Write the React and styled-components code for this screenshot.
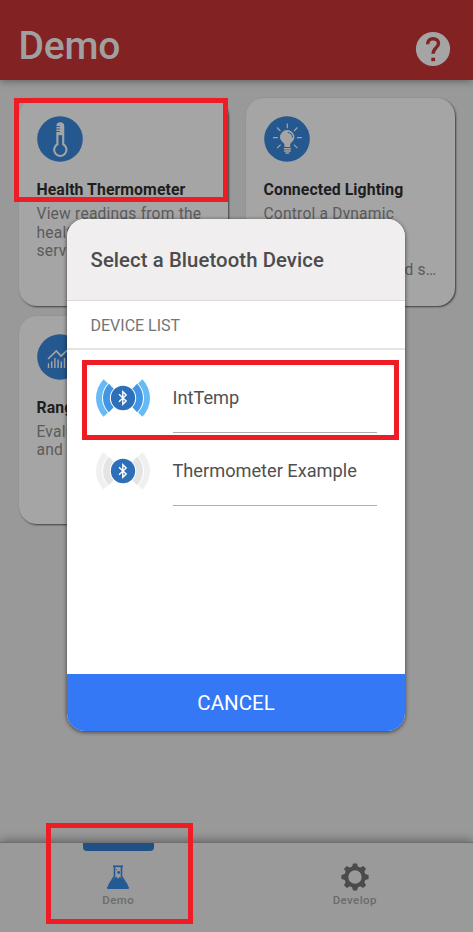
import React from "react";
import styled, { createGlobalStyle } from "styled-components";

const Global = createGlobalStyle`
  * { box-sizing: border-box; }
  body { margin: 0; background: #999; font-family: Roboto, sans-serif; }
`;

const Screen = styled.div`
  position: relative;
  display: flex;
  flex-direction: column;
  width: 473px;
  height: 932px;
  overflow: hidden;
  background: #999;
`;

const Header = styled.header`
  display: flex;
  justify-content: space-between;
  height: 80px;
  padding: 0 22px 0 18.5px;
  background: #822222;
  box-shadow: 0 1px 8px rgba(0, 0, 0, 0.4);
`;

const PageTitle = styled.h1`
  margin: 23px 0 0;
  font-size: 39px;
  line-height: 46px;
  font-weight: 500;
  letter-spacing: -0.2px;
  color: #a0a0a0;
`;

const HelpIcon = styled.svg`
  width: 36px;
  height: 36px;
  margin-top: 31px;
`;

const CardGrid = styled.main`
  flex: 1;
  display: grid;
  grid-template-columns: 209px 209px;
  grid-auto-rows: 208px;
  gap: 9.5px 18px;
  align-content: start;
  padding: 18px 18px 0 18.5px;
`;

const Card = styled.section`
  padding: 18px 18px;
  border-radius: 18px;
  background: #a5a5a5;
  box-shadow: 1px 1px 2px rgba(0, 0, 0, 0.6);
`;

const CardIcon = styled.svg`
  display: block;
  width: 46px;
  height: 46px;
`;

const CardTitle = styled.h2`
  margin: 19px 0 0;
  font-size: 15.8px;
  line-height: 18px;
  font-weight: 700;
  letter-spacing: 0.08px;
  color: #1e1e1e;
  white-space: nowrap;
`;

const CardText = styled.p`
  margin: 6px 0 0;
  font-size: 15.6px;
  line-height: 18.7px;
  letter-spacing: 0.2px;
  color: #5b5b5b;
  white-space: pre;
`;

const TabBar = styled.nav`
  display: grid;
  grid-template-columns: 1fr 1fr;
  height: 90px;
  border-top: 1px solid #6f6f6f;
  background: #9a9a9a;
  box-shadow: 0 -1px 10px rgba(0, 0, 0, 0.4);
`;

const Tab = styled.div`
  display: flex;
  flex-direction: column;
  align-items: center;
  font-size: 11.5px;
  line-height: 14px;
  font-weight: 500;
  letter-spacing: 0.4px;
  color: #6b6b6b;
`;

const Indicator = styled.span`
  width: 71px;
  height: 8px;
  margin-bottom: 12px;
  border-radius: 0 0 4px 4px;
  background: ${(p) => (p.$active ? "#1f5185" : "transparent")};
`;

const TabIcon = styled.svg`
  width: 28px;
  height: 28px;
  margin-bottom: 2px;
`;

const Dialog = styled.div`
  position: absolute;
  left: 67px;
  top: 219px;
  width: 338px;
  height: 512px;
  display: flex;
  flex-direction: column;
  border-radius: 18px;
  overflow: hidden;
  background: #fff;
  box-shadow: 0 1px 4px rgba(0, 0, 0, 0.65);
`;

const DialogTitle = styled.h2`
  height: 82px;
  margin: 0;
  padding-left: 23.5px;
  border-bottom: 1px solid #dadada;
  background: #f0eeef;
  font-size: 20.3px;
  line-height: 82px;
  font-weight: 500;
  letter-spacing: 0.1px;
  color: #4c4c4c;
`;

const ListHeading = styled.div`
  height: 49px;
  padding-left: 23.5px;
  border-bottom: 2px solid #e4e4e4;
  font-size: 16px;
  line-height: 50px;
  color: #747474;
`;

const DeviceList = styled.div`
  flex: 1;
  padding: 10px 28px 0;
`;

const DeviceRow = styled.div`
  display: flex;
  height: 73px;
`;

const Signal = styled.svg`
  width: 56px;
  height: 44px;
  margin: 16px 21.5px 0 0;
`;

const DeviceName = styled.div`
  flex: 1;
  border-bottom: 1px solid #adadad;
  font-size: 18.2px;
  line-height: 76px;
  color: #505050;
  white-space: nowrap;
`;

const CancelButton = styled.button`
  height: 57px;
  padding: 0;
  border: 0;
  background: #3478f6;
  color: #fff;
  font-family: inherit;
  font-size: 20.5px;
`;

const Highlight = styled.div`
  position: absolute;
  left: ${(p) => p.$x}px;
  top: ${(p) => p.$y}px;
  width: ${(p) => p.$w}px;
  height: ${(p) => p.$h}px;
  border: 5px solid #ee1c24;
`;

const ThermometerIcon = () => (
  <CardIcon viewBox="0 0 46 46" fill="none">
    <circle cx="23" cy="23" r="22.8" fill="#24588f" />
    <path d="M20.4 28.3V10.2a2.9 2.9 0 0 1 5.8 0v18.1a6.2 6.2 0 1 1-5.8 0z" stroke="#a5a5a5" strokeWidth="2.1" />
    <path d="M20 8h6.2v11.2H20z" fill="#a5a5a5" />
    <path d="M19 10.5h4M19 13h4M19 15.5h4" stroke="#24588f" strokeWidth="0.9" />
  </CardIcon>
);

const BulbIcon = () => (
  <CardIcon viewBox="0 0 46 46" fill="none">
    <circle cx="23" cy="23" r="22.8" fill="#24588f" />
    <path d="M20.4 31v-2.4c0-1.7-4.4-3.4-4.4-7.3a7.2 7.2 0 0 1 14.4 0c0 3.9-4.2 5.6-4.2 7.3V31z" fill="#a5a5a5" />
    <path d="M20.3 32.8h6.2M20.6 35h5.6M22 37h2.6" stroke="#a5a5a5" strokeWidth="1.5" strokeLinecap="round" />
    <path d="M23.3 7.5v4.8M9 21.6h4.8M33 21.6h4.8M13 11.5l3.4 3.5M33.4 11.5 30 15M13.1 32.2l3.5-3.5M33.4 32.2l-3.5-3.5" stroke="#a5a5a5" strokeWidth="1.2" />
    <path d="M23.8 16.5a5.3 5.3 0 0 1 4.7 5" stroke="#24588f" strokeWidth="1" />
  </CardIcon>
);

const ChartIcon = () => (
  <CardIcon viewBox="0 0 46 46" fill="none">
    <circle cx="23" cy="23" r="22.8" fill="#24588f" />
    <path d="m11 25 8.3-8 4.7 5 7-6.5 3 2 4-5" stroke="#a5a5a5" strokeWidth="1.7" />
    <path d="M11.5 34v-4.8M14.7 34v-6.8M17.9 34V24M21.1 34v-8.5M24.3 34v-6.5M27.5 34V24M30.7 34V21M33.9 34V23" stroke="#a5a5a5" strokeWidth="1.4" />
  </CardIcon>
);

/* Ring sectors spread 45 degrees either side of the horizontal axis. */
const sector = (side, inner, outer, degrees) => {
  const a = (degrees * Math.PI) / 180;
  const c = Math.cos(a) * side;
  const s = Math.sin(a);
  const sweep = side > 0 ? 1 : 0;
  return `M${28 + c * outer} ${22 - s * outer}A${outer} ${outer} 0 0 ${sweep} ${28 + c * outer} ${22 + s * outer}L${28 + c * inner} ${22 + s * inner}A${inner} ${inner} 0 0 ${1 - sweep} ${28 + c * inner} ${22 - s * inner}Z`;
};

const SignalIcon = ({ near, far }) => (
  <Signal viewBox="0 0 56 44" fill="none">
    {[-1, 1].map((side) => (
      <React.Fragment key={side}>
        <path d={sector(side, 21, 27, 44)} fill={far} />
        <path d={sector(side, 13.2, 20, 45)} fill={near} />
      </React.Fragment>
    ))}
    <circle cx="28" cy="22" r="12.2" fill="#2d70b9" />
    <path d="m24 18.2 7.2 6.8-3.4 3.3V15.7l3.4 3.3-7.2 6.8" stroke="#fff" strokeWidth="1.4" />
  </Signal>
);

const FlaskIcon = () => (
  <TabIcon viewBox="0 0 28 28" fill="none">
    <path d="M9 3.3h10" stroke="#245a94" strokeWidth="1.7" />
    <path d="M10.5 4v9.3L4.6 22.7M17.5 4v9.3l5.9 9.4" stroke="#245a94" strokeWidth="1.6" />
    <path d="m10 15.4 2-1.9 2 2.2 2-1.9 2.2 1.9 6.5 8.3c.9 1.2.2 2-1 2H4.3c-1.3 0-1.9-.8-1-2z" fill="#245a94" />
    <circle cx="14.7" cy="9.5" r="1.4" fill="#245a94" />
    <circle cx="12.5" cy="6.8" r=".6" fill="#245a94" />
  </TabIcon>
);

const GearIcon = () => (
  <TabIcon viewBox="0 0 28 28" fill="none">
    <circle cx="14" cy="14" r="8.7" stroke="#4b4b4b" strokeWidth="4" />
    {[0, 45, 90, 135, 180, 225, 270, 315].map((angle) => (
      <path key={angle} d="m10.8 4.8 1.2-4.4h4l1.2 4.4z" fill="#4b4b4b" transform={`rotate(${angle} 14 14)`} />
    ))}
  </TabIcon>
);

export default function App() {
  return (
    <Screen>
      <Global />
      <Header>
        <PageTitle>Demo</PageTitle>
        <HelpIcon viewBox="0 0 36 36" fill="none">
          <circle cx="18" cy="18" r="17.1" fill="#a5a5a5" />
          <path d="M12.6 13.2c0-3.3 2.1-5.5 5.5-5.5 3.2 0 5.4 2 5.4 4.9 0 3.9-5.4 4.4-5.4 10.1" stroke="#822222" strokeWidth="3.4" />
          <path d="M16.3 26.7h3.8v3.5h-3.8z" fill="#822222" />
        </HelpIcon>
      </Header>

      <CardGrid>
        <Card>
          <ThermometerIcon />
          <CardTitle>Health Thermometer</CardTitle>
          <CardText>{"View readings from the\nhealth thermometer\nservice"}</CardText>
        </Card>
        <Card>
          <BulbIcon />
          <CardTitle>Connected Lighting</CardTitle>
          <CardText>{"Control a Dynamic\nMultiprotocol light\nwith connections\nfor the Bluetooth and s…"}</CardText>
        </Card>
        <Card>
          <ChartIcon />
          <CardTitle>Range Test</CardTitle>
          <CardText>{"Evaluate the link\nand range"}</CardText>
        </Card>
      </CardGrid>

      <TabBar>
        <Tab>
          <Indicator $active />
          <FlaskIcon />
          Demo
        </Tab>
        <Tab>
          <Indicator />
          <GearIcon />
          Develop
        </Tab>
      </TabBar>

      <Dialog>
        <DialogTitle>Select a Bluetooth Device</DialogTitle>
        <ListHeading>DEVICE LIST</ListHeading>
        <DeviceList>
          <DeviceRow>
            <SignalIcon near="#4295e2" far="#68baf4" />
            <DeviceName>IntTemp</DeviceName>
          </DeviceRow>
          <DeviceRow>
            <SignalIcon near="#e4e4e4" far="#f0f0f0" />
            <DeviceName>Thermometer Example</DeviceName>
          </DeviceRow>
        </DeviceList>
        <CancelButton>CANCEL</CancelButton>
      </Dialog>

      <Highlight $x={14} $y={98} $w={214} $h={104} />
      <Highlight $x={82} $y={360} $w={317} $h={80} />
      <Highlight $x={46} $y={823} $w={147} $h={101} />
    </Screen>
  );
}
